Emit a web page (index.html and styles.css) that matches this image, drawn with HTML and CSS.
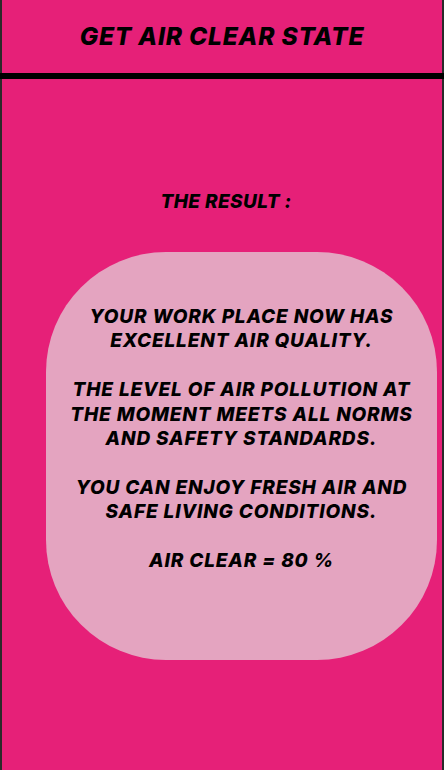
FILE: index.html
```html
<!DOCTYPE html>
<html lang="en">
<head>
<meta charset="utf-8">
<title>Get Air Clear State</title>
<link rel="stylesheet" href="styles.css">
</head>
<body>
<div class="page">
  <header class="topbar">
    <h1 class="title">GET AIR CLEAR STATE</h1>
  </header>
  <main class="content">
    <h2 class="result-label">THE RESULT :</h2>
    <section class="result-card">
      <p class="result-text">YOUR WORK PLACE NOW HAS<br>EXCELLENT AIR QUALITY.<br><br>THE LEVEL OF AIR POLLUTION AT<br>THE MOMENT MEETS ALL NORMS<br>AND SAFETY STANDARDS.<br><br>YOU CAN ENJOY FRESH AIR AND<br>SAFE LIVING CONDITIONS.<br><br>AIR CLEAR = 80 %</p>
    </section>
  </main>
</div>
</body>
</html>
```
FILE: styles.css
```css
* { box-sizing: border-box; }
html, body { margin: 0; padding: 0; }
body {
  background: #e62078;
  font-family: Inter, "Noto Sans", sans-serif;
  color: #000;
}
.page {
  min-height: 770px;
  background: #e62078;
  box-shadow: inset 2px 0 0 #2a2a2a, inset -2px 0 0 #2a2a2a;
}
.topbar {
  height: 79px;
  border-bottom: 6px solid #000;
  display: flex;
  align-items: center;
  justify-content: center;
}
.title {
  margin: 0;
  font-size: 24.5px;
  font-weight: 800;
  font-style: italic;
  letter-spacing: 0.8px;
  line-height: 1;
}
.content {
  display: flex;
  flex-direction: column;
  align-items: center;
}
.result-label {
  margin: 111px 0 0;
  padding-left: 8px;
  font-size: 19px;
  font-weight: 800;
  font-style: italic;
  letter-spacing: 0.4px;
  line-height: 24px;
}
.result-card {
  align-self: stretch;
  margin: 38px 7px 0 46px;
  height: 408px;
  background: #e4a4c0;
  border-radius: 120px;
  padding-top: 53px;
}
.result-text {
  margin: 0;
  text-align: center;
  font-size: 19px;
  font-weight: 800;
  font-style: italic;
  letter-spacing: 0.85px;
  line-height: 24.4px;
}
```
